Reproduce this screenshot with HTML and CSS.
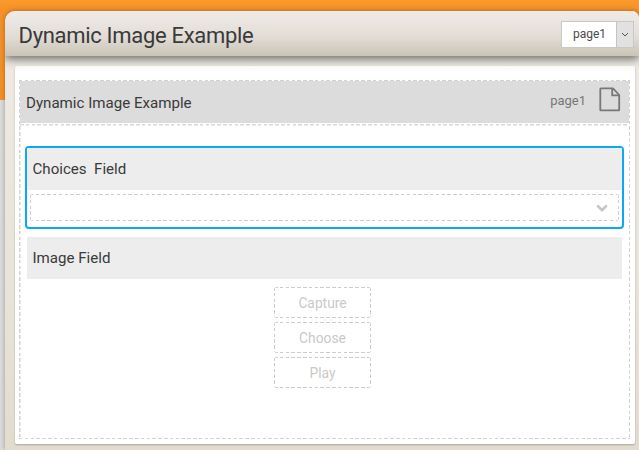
FILE: index.html
```html
<!DOCTYPE html>
<html lang="en">
<head>
<meta charset="utf-8">
<title>Dynamic Image Example</title>
<link rel="stylesheet" href="styles.css">
</head>
<body>
<main class="panel">
  <header class="topbar">
    <h1>Dynamic Image Example</h1>
    <div class="picker">
      <span class="picker-value">page1</span>
      <span class="picker-toggle"><svg width="8" height="6" viewBox="0 0 8 6"><path d="M1 1l3 3 3-3" fill="none" stroke="#555" stroke-width="1"/></svg></span>
    </div>
  </header>
  <section class="card">
    <div class="canvas dashed">
      <div class="page-title">
        <h2>Dynamic Image Example</h2>
        <span class="page-name">page1</span>
        <svg class="page-icon" width="22" height="25" viewBox="0 0 22 25" fill="none" stroke="#777" stroke-width="1.8" stroke-linejoin="round"><path d="M14 1.4H1.9q-.6 0-.6.6v20.7q0 .6.6.6h17.7q.6 0 .6-.6V8z"/><path d="M13.2 1.4v7h7"/></svg>
      </div>
      <div class="fields">
        <div class="field selected">
          <h3>Choices&nbsp; Field</h3>
          <div class="select dashed"><svg width="12" height="9" viewBox="0 0 12 9"><path d="M1.3 1.5L6 6.2l4.7-4.7" fill="none" stroke="#c6c6c6" stroke-width="2.7"/></svg></div>
        </div>
        <div class="field">
          <h3>Image Field</h3>
          <div class="actions">
            <div class="action dashed">Capture</div>
            <div class="action dashed">Choose</div>
            <div class="action dashed">Play</div>
          </div>
        </div>
      </div>
    </div>
  </section>
</main>
</body>
</html>
```
FILE: styles.css
```css
* { box-sizing: border-box; }
body {
  margin: 0;
  height: 450px;
  overflow: hidden;
  padding: 11px 0 0 5px;
  font-family: Roboto, sans-serif;
  color: #3a3a3a;
  background: linear-gradient(#fb9a2c, #f4912a 10px, #f4912a 100px, #dcdcdc 100px);
}
h1, h2, h3 { margin: 0; font-weight: 400; }
svg { display: block; }
.panel {
  height: 439px;
  border-radius: 10px 7px 0 0;
  background: linear-gradient(#efebe5, #e9e4d9 60%, #e2dccf);
  box-shadow: 0 0 5px rgba(0, 0, 0, .3);
}
.topbar {
  position: relative;
  height: 45px;
  display: flex;
  align-items: center;
  justify-content: space-between;
  padding: 0 5px 0 13.5px;
  border-radius: 10px 7px 0 0;
  border-top: 1px solid #f5eee7;
  background: linear-gradient(#efebe9, #e2ddd6 55%, #cac4b7);
  box-shadow: 0 3px 10px rgba(0, 0, 0, .55);
  clip-path: inset(0 0 -18px 0 round 10px 7px 0 0);
}
h1 { font-size: 22px; letter-spacing: -.31px; line-height: 26px; padding-top: 3px; }
.picker {
  display: flex;
  width: 73px;
  height: 27px;
  border: 1px solid #c8c8c8;
  background: #fff;
}
.picker-value { flex: 1; text-align: center; font-size: 12px; line-height: 25px; padding-left: 1px; color: #4a4a4a; }
.picker-toggle {
  width: 17px;
  display: flex;
  align-items: center;
  justify-content: center;
  border-left: 1px solid #c4c4c4;
  background: #e1e1e1;
}
.picker-toggle svg { margin-top: 2px; }
.card {
  margin: 10px 4px 0 10px;
  height: 378px;
  padding: 14px 5px 5px 4px;
  border-radius: 2px;
  background: linear-gradient(#f8f8f8, #fff 7px);
  box-shadow: 0 1px 2px rgba(0, 0, 0, .25);
  position: relative;
}
.dashed {
  --dash: #ccc;
  --weight: 1px;
  --ink: 3.5px;
  --step: 5.8px;
  --across: repeating-linear-gradient(90deg, var(--dash) 0 var(--ink), transparent var(--ink) var(--step));
  --down: repeating-linear-gradient(var(--dash) 0 var(--ink), transparent var(--ink) var(--step));
  background:
    var(--across) top / 100% var(--weight) no-repeat,
    var(--across) bottom / 100% var(--weight) no-repeat,
    var(--down) left / var(--weight) 100% no-repeat,
    var(--down) right / var(--weight) 100% no-repeat;
}
.canvas { --dash: #d2d2d2; --weight: 1.5px; height: 359px; padding: 1px; }
.page-title {
  height: 44.5px;
  display: flex;
  align-items: center;
  padding: 0 8px 2px 6px;
  background:
    repeating-linear-gradient(90deg, #d8d8d8 0 3.5px, transparent 3.5px 5.8px) bottom / 100% 1.5px no-repeat,
    linear-gradient(#dcdcdc, #dcdcdc) top / 100% 42px no-repeat;
}
h2 { flex: 1; font-size: 15.1px; line-height: 20px; padding-top: 2px; }
.page-name { margin-right: 13px; font-size: 13px; color: #777; padding-bottom: 3px; }
.page-icon { margin-bottom: 5px; }
.fields { padding: 20.5px 5px 0 5px; }
.field.selected {
  height: 83px;
  border: 2px solid #0ba8f3;
  border-radius: 4px;
  margin-bottom: 8px;
}
h3 { height: 42px; font-size: 15.1px; line-height: 42px; padding-left: 5.5px; background: #ededed; }
.field:not(.selected) h3 { margin: 0 2px; border-radius: 1px; line-height: 43px; }
.select {
  margin: 4px 3.5px 0 3px;
  height: 27px;
  border-radius: 3px;
  display: flex;
  align-items: center;
  justify-content: flex-end;
  padding: 2px 11px 0 0;
}
.actions { display: flex; flex-direction: column; align-items: center; gap: 4px; padding: 8px 4px 0 0; }
.action {
  width: 97px;
  height: 31px;
  border-radius: 3px;
  text-align: center;
  font-size: 13.8px;
  line-height: 32px;
  color: #c9c9c9;
}
```
